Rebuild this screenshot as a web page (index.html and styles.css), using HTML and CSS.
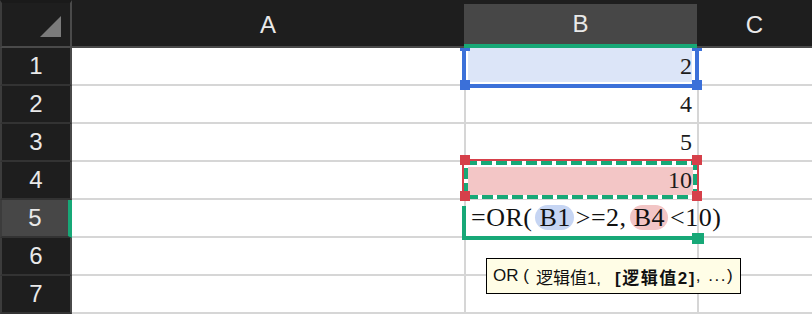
FILE: index.html
```html
<!DOCTYPE html>
<html lang="zh">
<head>
<meta charset="utf-8">
<title>Sheet</title>
<link rel="stylesheet" href="styles.css">
</head>
<body>
<div class="sheet">
  <div class="corner"><svg class="tri" width="21" height="21" viewBox="0 0 21 21"><polygon points="21,0 21,21 0,21" fill="#7b7b7b"/></svg></div>
  <div class="colhead">A</div>
  <div class="colhead active">B</div>
  <div class="colhead">C</div>

  <div class="rowhead">1</div>
  <div class="cell"></div>
  <div class="cell colb val">
    <div class="sel-blue"><div class="fill-blue"></div></div>
    <span class="h blue tl"></span><span class="h blue tr"></span><span class="h blue bl"></span><span class="h blue br"></span>
    <span class="v">2</span>
  </div>
  <div class="cell colc"></div>

  <div class="rowhead">2</div>
  <div class="cell"></div>
  <div class="cell colb val"><span class="v">4</span></div>
  <div class="cell colc"></div>

  <div class="rowhead">3</div>
  <div class="cell"></div>
  <div class="cell colb val"><span class="v">5</span></div>
  <div class="cell colc"></div>

  <div class="rowhead">4</div>
  <div class="cell"></div>
  <div class="cell colb val">
    <div class="sel-red"></div>
    <div class="fill-red"></div>
    <svg class="ants" width="233" height="38" viewBox="0 0 233 38"><rect x="2" y="2" width="229" height="34" fill="none" stroke="#ffffff" stroke-width="4"/><rect x="2" y="2" width="229" height="34" fill="none" stroke="#17a877" stroke-width="4" stroke-dasharray="11 4"/></svg>
    <span class="h red tl"></span><span class="h red tr"></span><span class="h red bl2"></span><span class="h red br2"></span>
    <span class="v">10</span>
  </div>
  <div class="cell colc"></div>

  <div class="rowhead active">5</div>
  <div class="cell"></div>
  <div class="cell colb formula">
    <div class="edit"></div>
    <span class="h green ge"></span>
    <span class="f">=OR(<span class="pill pb">B1</span>&gt;=2,<span class="pill pr">B4</span>&lt;10)</span>
  </div>
  <div class="cell colc"></div>

  <div class="rowhead">6</div>
  <div class="cell"></div>
  <div class="cell colb"></div>
  <div class="cell colc"></div>

  <div class="rowhead">7</div>
  <div class="cell"></div>
  <div class="cell colb"></div>
  <div class="cell colc"></div>

  <div class="tip"><span>OR (</span><span class="t1">逻辑值1,</span><b>[逻辑值2]</b><span class="t3">, ...)</span></div>
</div>
</body>
</html>
```

FILE: styles.css
```css
* { box-sizing: border-box; }
html, body { margin: 0; padding: 0; background: #ffffff; }
.sheet {
  position: relative;
  display: grid;
  grid-template-columns: 72px 392px 233px 115px;
  grid-template-rows: 48px repeat(7, 38px);
  width: 812px;
  height: 314px;
  overflow: hidden;
  background: #ffffff;
}
.corner {
  background: #1e1e1e;
  border-left: 2px solid #3c3c3c;
  border-right: 2px solid #4a4a4a;
  border-bottom: 2px solid #4a4a4a;
  border-top: 3px solid #1a1a1a;
  display: flex;
  justify-content: flex-end;
  align-items: flex-end;
  padding: 0 9px 9px 0;
  position: relative;
  z-index: 3;
}
.tri { display: block; }
.colhead {
  position: relative;
  z-index: 3;
  background: #1e1e1e;
  border-top: 4px solid #1e1e1e;
  border-bottom: 2px solid #4a4a4a;
  display: flex;
  align-items: center;
  justify-content: center;
  color: #e9e9e9;
  font-family: "Liberation Sans", Arial, sans-serif;
  font-size: 24px;
}
.colhead.active {
  background: #474747;
  border-bottom: 4px solid #17a877;
}
.rowhead {
  background: #1e1e1e;
  border-left: 2px solid #3c3c3c;
  border-right: 2px solid #4a4a4a;
  border-bottom: 2px solid #333333;
  display: flex;
  align-items: center;
  justify-content: center;
  color: #e9e9e9;
  font-family: "Liberation Sans", Arial, sans-serif;
  font-size: 24px;
}
.rowhead.active {
  background: #474747;
  border-right: 4px solid #17a877;
}
.cell {
  position: relative;
  border-bottom: 2px solid #d6d6d6;
}
.colb, .colc { border-left: 2px solid #d6d6d6; }
.val {
  display: flex;
  align-items: center;
  justify-content: flex-end;
  padding-right: 5px;
}
.v, .f {
  position: relative;
  z-index: 2;
  font-family: "Liberation Serif", "Times New Roman", serif;
  font-size: 24px;
  color: #1c1c1c;
}
.sel-blue {
  position: absolute;
  left: -4px; right: -2px; top: 0; bottom: -4px;
  border: 4px solid #3b70d9;
  border-top: 0;
  z-index: 1;
}
.fill-blue {
  position: absolute;
  left: 2px; right: 3px; top: 0; bottom: 2px;
  background: #dce5f8;
}
.h {
  position: absolute;
  width: 10px;
  height: 10px;
  z-index: 2;
}
.h.blue { background: #3b70d9; }
.h.red { background: #d6404a; }
.h.green { background: #17a877; }
.tl { left: -6px; top: -7px; }
.tr { left: 226px; top: -7px; }
.bl { left: -6px; top: 32px; }
.br { left: 226px; top: 32px; }
.bl2 { left: -6px; top: 29px; }
.br2 { left: 226px; top: 29px; }
.sel-red {
  position: absolute;
  left: -4px; right: -2px; top: -3px; bottom: -1px;
  border: 2px solid #d6404a;
  z-index: 1;
}
.fill-red {
  position: absolute;
  left: 2px; right: 4px; top: 5px; bottom: 3px;
  background: #f3c6c6;
  z-index: 1;
}
.ants {
  position: absolute;
  left: -2px; top: -1px;
  z-index: 1;
}
.formula {
  display: flex;
  align-items: center;
  padding-left: 5px;
}
.f {
  white-space: nowrap;
  color: #111111;
  font-size: 26px;
  letter-spacing: 0.5px;
}
.pill {
  display: inline-block;
  padding: 0 3px 0 4px;
  margin: 0 2px 0 3px;
  border-radius: 13px;
  line-height: 25px;
}
.pb { background: #c6d5f3; }
.pr { background: #f2c5c5; }
.edit {
  position: absolute;
  left: -4px; top: 6px; right: 4px; bottom: -4px;
  border-left: 4px solid #17a877;
  border-bottom: 4px solid #17a877;
  z-index: 1;
}
.ge { left: 226px; top: 33px; width: 12px; height: 11px; }
.tip {
  position: absolute;
  left: 486px;
  top: 258px;
  width: 255px;
  height: 36px;
  border: 1px solid #000000;
  background: #fffde6;
  z-index: 4;
  display: flex;
  align-items: center;
  padding-left: 6px;
  font-family: "Liberation Sans", "Noto Sans CJK SC", sans-serif;
  font-size: 17px;
  color: #111111;
  white-space: pre;
}
.t1 { margin-left: 7px; }
.tip b { font-weight: bold; margin-left: 14px; letter-spacing: 1.5px; }
.t3 { letter-spacing: 1.5px; }
```
